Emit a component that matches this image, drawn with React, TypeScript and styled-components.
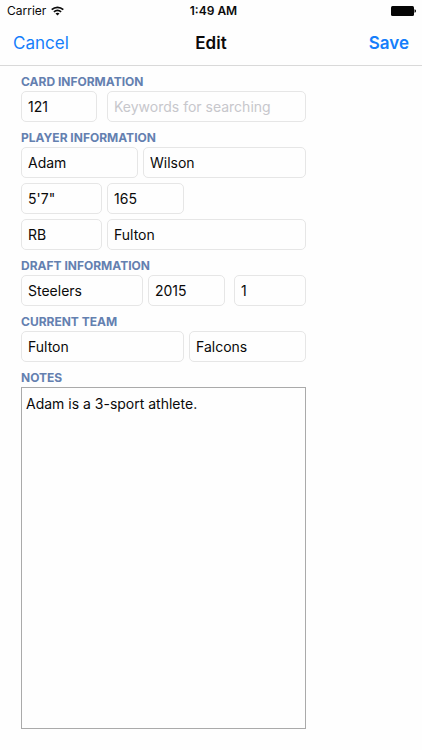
import React from "react";
import styled, { createGlobalStyle } from "styled-components";

const GlobalStyle = createGlobalStyle`
  *, *::before, *::after { box-sizing: border-box; }
  body {
    margin: 0;
    background: #fefefe;
    color: #0a0a0a;
    font-family: Inter, "Liberation Sans", sans-serif;
  }
  button, input, textarea { font: inherit; color: inherit; }
`;

const Screen = styled.div`
  display: flex;
  flex-direction: column;
  min-height: 100vh;
`;

const StatusBar = styled.div`
  display: grid;
  grid-template-columns: 1fr auto 1fr;
  align-items: center;
  height: 22px;
  padding: 0 6px 0 7px;
  font-size: 12px;
  line-height: 16px;
`;

const Carrier = styled.span`
  display: flex;
  align-items: center;
  gap: 5px;
`;

const Clock = styled.time`
  padding-left: 4px;
  font-weight: 600;
`;

const Battery = styled.svg`
  justify-self: end;
`;

const NavBar = styled.header`
  display: grid;
  grid-template-columns: 1fr auto 1fr;
  align-items: center;
  height: 44px;
  padding: 0 13px 1px;
  border-bottom: 1px solid #d9d9d9;
`;

const Title = styled.h1`
  margin: 0;
  font-size: 17px;
  line-height: 24px;
  font-weight: 600;
`;

const NavButton = styled.button<{ $primary?: boolean }>`
  justify-self: ${(p) => (p.$primary ? "end" : "start")};
  padding: 0;
  border: 0;
  background: none;
  color: #157efb;
  font-size: 17px;
  line-height: 24px;
  font-weight: ${(p) => (p.$primary ? 600 : 400)};
  cursor: pointer;
`;

const Form = styled.form`
  display: flex;
  flex: 1;
  flex-direction: column;
  width: 100%;
  max-width: 327px;
  padding: 0 21px 21px;
`;

const Section = styled.fieldset`
  display: grid;
  row-gap: 5px;
  min-width: 0;
  margin: 0;
  padding: 0;
  border: 0;
`;

const NotesSection = styled.div`
  display: flex;
  flex: 1;
  flex-direction: column;
`;

const Heading = styled.legend`
  height: 25px;
  padding: 5px 0 0;
  color: #6480b0;
  font-size: 12px;
  line-height: 22px;
  font-weight: 700;
`;

const Row = styled.div<{ $columns: string; $gap?: number }>`
  display: grid;
  grid-template-columns: ${(p) => p.$columns};
  column-gap: ${(p) => p.$gap ?? 5}px;
`;

const Field = styled.input`
  width: 100%;
  min-width: 0;
  height: 31px;
  padding: 0 6px 1px;
  border: 1px solid #e6e6e6;
  border-radius: 5px;
  background: #fefefe;
  font-size: 14px;
  line-height: 20px;

  &::placeholder { color: #c7c7cc; opacity: 1; }
`;

const Notes = styled.textarea`
  flex: 1;
  min-height: 120px;
  padding: 6px 4px;
  border: 1px solid #aaaaaa;
  border-radius: 0;
  background: #fefefe;
  font-size: 14px;
  line-height: 20px;
  resize: none;
`;

export default function App() {
  return (
    <Screen>
      <GlobalStyle />
      <StatusBar>
        <Carrier>
          Carrier
          <svg width="13" height="10" viewBox="0 0 13 10" role="img" aria-label="Wi-Fi">
            <g fill="none" stroke="#0a0a0a" strokeWidth="1.7">
              <path d="M0.7 3.6C4 0.5 9 0.5 12.3 3.6" />
              <path d="M2.9 5.9C5 4 8 4 10.1 5.9" />
            </g>
            <path d="M6.5 9.5L4.5 7.4C5.6 6.4 7.4 6.4 8.5 7.4Z" fill="#0a0a0a" />
          </svg>
        </Carrier>
        <Clock>1:49 AM</Clock>
        <Battery width="26" height="10" viewBox="0 0 26 10" role="img" aria-label="Battery full">
          <rect x="1" y="0" width="23" height="10" rx="1.5" fill="#050505" />
          <path d="M24.5 3.2C25.6 3.6 26 4.2 26 5S25.6 6.4 24.5 6.8Z" fill="#050505" />
        </Battery>
      </StatusBar>
      <NavBar>
        <NavButton type="button">Cancel</NavButton>
        <Title>Edit</Title>
        <NavButton type="submit" form="card-form" $primary>Save</NavButton>
      </NavBar>
      <Form id="card-form" onSubmit={(e) => e.preventDefault()}>
        <Section>
          <Heading>CARD INFORMATION</Heading>
          <Row $columns="76fr 199fr" $gap={10}>
            <Field aria-label="Card number" defaultValue="121" />
            <Field aria-label="Keywords" placeholder="Keywords for searching" />
          </Row>
        </Section>
        <Section>
          <Heading>PLAYER INFORMATION</Heading>
          <Row $columns="117fr 163fr">
            <Field aria-label="First name" defaultValue="Adam" />
            <Field aria-label="Last name" defaultValue="Wilson" />
          </Row>
          <Row $columns="81fr 77fr 117fr">
            <Field aria-label="Height" defaultValue={"5'7\""} />
            <Field aria-label="Weight" defaultValue="165" />
          </Row>
          <Row $columns="81fr 199fr">
            <Field aria-label="Position" defaultValue="RB" />
            <Field aria-label="School" defaultValue="Fulton" />
          </Row>
        </Section>
        <Section>
          <Heading>DRAFT INFORMATION</Heading>
          <Row $columns="204fr 72fr" $gap={9}>
            <Row $columns="122fr 77fr">
              <Field aria-label="Draft team" defaultValue="Steelers" />
              <Field aria-label="Draft year" defaultValue="2015" />
            </Row>
            <Field aria-label="Draft round" defaultValue="1" />
          </Row>
        </Section>
        <Section>
          <Heading>CURRENT TEAM</Heading>
          <Row $columns="163fr 117fr">
            <Field aria-label="Team city" defaultValue="Fulton" />
            <Field aria-label="Team name" defaultValue="Falcons" />
          </Row>
        </Section>
        <NotesSection>
          <Heading as="label" htmlFor="notes">NOTES</Heading>
          <Notes id="notes" defaultValue="Adam is a 3-sport athlete." />
        </NotesSection>
      </Form>
    </Screen>
  );
}
